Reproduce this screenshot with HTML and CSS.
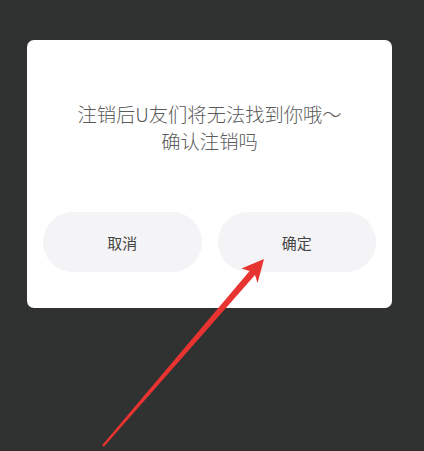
FILE: index.html
```html
<!DOCTYPE html>
<html lang="zh-CN">
<head>
<meta charset="utf-8">
<link rel="stylesheet" href="styles.css">
</head>
<body>
<div class="screen">
  <div class="dialog">
    <div class="message">
      <p>注销后U友们将无法找到你哦～</p>
      <p>确认注销吗</p>
    </div>
    <div class="actions">
      <button class="btn">取消</button>
      <button class="btn">确定</button>
    </div>
  </div>
  <svg class="arrow" width="424" height="451" viewBox="0 0 424 451">
    <polygon fill="#e83431" points="264,259 241.5,268.6 249.6,270.9 102.2,445.2 103.8,446.8 255,275 257.6,283"/>
  </svg>
</div>
</body>
</html>
```
FILE: styles.css
```css
html, body {
  margin: 0;
  padding: 0;
  background: #303131;
}
.screen {
  position: relative;
  width: 424px;
  height: 451px;
  overflow: hidden;
  padding: 40px 32px 0 27px;
  box-sizing: border-box;
  font-family: "Noto Sans CJK SC", "Noto Sans", sans-serif;
}
.dialog {
  width: 365px;
  height: 268px;
  background: #fff;
  border-radius: 7px;
  box-sizing: border-box;
  padding: 61px 16px 36px;
  display: flex;
  flex-direction: column;
}
.message {
  text-align: center;
  color: #5a5a5a;
  font-size: 19.3px;
  font-weight: 300;
  line-height: 27px;
}
.message p {
  margin: 0;
}
.actions {
  margin-top: auto;
  display: flex;
  gap: 16px;
}
.btn {
  flex: 1;
  height: 60px;
  border: none;
  border-radius: 30px;
  background: #f4f4f6;
  color: #444;
  font-family: inherit;
  font-size: 15px;
  padding: 0;
}
.arrow {
  position: absolute;
  left: 0;
  top: 0;
}
```
